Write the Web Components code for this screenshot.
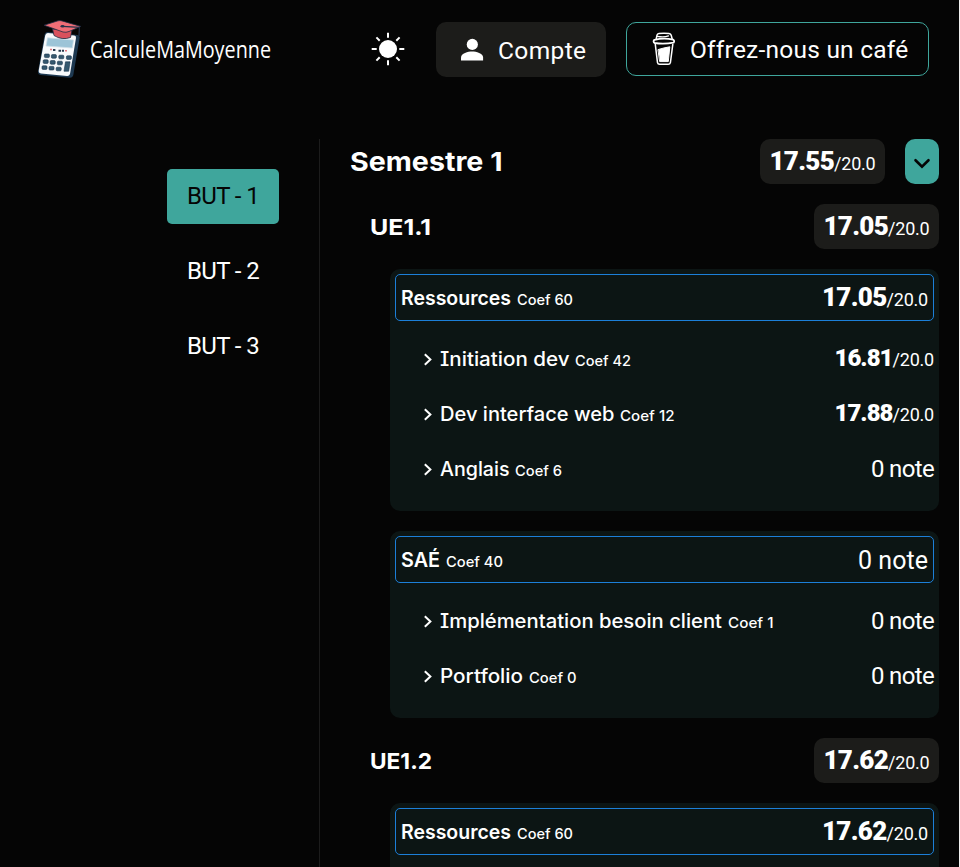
<!DOCTYPE html>
<html lang="fr">
<head>
<meta charset="utf-8">
<title>CalculeMaMoyenne</title>
<style>
  html, body { margin: 0; height: 100%; }
  body { background: #050505; color: #fff; font-family: Roboto, "Liberation Sans", sans-serif; overflow: hidden; }
</style>
</head>
<body>
<grade-app></grade-app>
<script>
const define = (name, html, setup) => {
  const tpl = document.createElement('template');
  tpl.innerHTML = html;
  customElements.define(name, class extends HTMLElement {
    connectedCallback() {
      if (this.shadowRoot) return;
      this.attachShadow({ mode: 'open' }).append(tpl.content.cloneNode(true));
      if (setup) setup.call(this, this.shadowRoot);
    }
  });
};

// Text set to an exact advance width: by tracking, or by horizontal stretch with [stretch].
define('fit-text', `<style>
  :host { display: inline-block; white-space: pre; flex: none; }
  span { display: inline-block; transform-origin: 0 50%; }
</style><span></span>`, function (root) {
  const s = root.querySelector('span');
  const text = this.getAttribute('text');
  const w = +this.getAttribute('w');
  s.textContent = text;
  const natural = s.offsetWidth ? s.getBoundingClientRect().width : w;
  if (this.hasAttribute('stretch')) s.style.transform = `scaleX(${w / natural})`;
  else s.style.letterSpacing = (w - natural) / text.length + 'px';
  this.style.width = w + 'px';
});

define('app-logo', `<style>:host { display: block; width: 44px; height: 60px; } svg { display: block; }</style>
<svg width="44" height="60" viewBox="0 0 44 60">
  <path d="M10 12 L39.5 15 Q42 15.3 41.6 18 L35.5 54 Q35 58 31.5 57.7 L2.5 55 Q-.6 54.5 .1 51 L6.5 15 Q7 12 10 12z" fill="#1d3850"/>
  <path d="M9.8 13 L36.2 15.6 Q38.4 16 38 18 L32.2 53 Q31.7 56.2 29 56 L3 53.5 Q.2 53 .8 50 L7.2 15.5 Q7.7 13 9.8 13z" fill="#f8fafc"/>
  <path d="M9.5 17.8 L35.5 20 L34.4 28 L8 26z" fill="#9cc4d7" stroke="#cfdfe8" stroke-width=".8"/>
  <path d="M12 29.5h2M27 30.7h2" stroke="#e07880" stroke-width="1.6"/>
  <path d="M15 30h2.4M20.5 30.7h2.6M25 29.8v2" stroke="#26384c" stroke-width="2"/>
  <g fill="#35586f" stroke="#16314a" stroke-width=".6">
    <rect x="6.4" y="34" width="5" height="3.6" rx="1"/><rect x="13.4" y="34.6" width="5" height="3.6" rx="1"/><rect x="20.8" y="35.2" width="5" height="3.6" rx="1"/><rect x="28.4" y="35.8" width="5" height="3.6" rx="1"/>
    <rect x="5.2" y="39.8" width="5" height="3.6" rx="1"/><rect x="12.2" y="40.6" width="5" height="3.6" rx="1"/><rect x="19.4" y="41.2" width="5" height="3.6" rx="1"/>
    <rect x="4" y="45.8" width="5" height="3.6" rx="1"/><rect x="11" y="46.4" width="5" height="3.6" rx="1"/><rect x="18.2" y="47.2" width="5" height="3.6" rx="1"/>
    <path d="M27.5 41.8h4.6l-1.4 9.4h-4.7z"/>
  </g>
  <path d="M14.5 9 L34 10 L32.5 17.5 Q24 20.5 16 15.5z" fill="#d9515d" stroke="#1d2c42" stroke-width=".8"/>
  <path d="M6 5.2 L20 .8 Q22 .3 24 .9 L42.8 6.4 L31 11.5 Q28 12.8 25 12z" fill="#ef6d76" stroke="#1d2c42" stroke-width=".8"/>
  <ellipse cx="24.5" cy="6.3" rx="2" ry="1.3" fill="#25324a"/>
  <path d="M24.5 6.3 L41.4 7.3 L41 16" fill="none" stroke="#25324a" stroke-width="1.2"/>
</svg>`);

define('sun-icon', `<style>:host { display: block; width: 34px; height: 34px; } svg { display: block; }</style>
<svg width="34" height="34" viewBox="-17 -17 34 34"><circle r="9" fill="#fff"/>
<path d="M0-16.3v5M0 16.3v-5M-16.3 0h5M16.3 0h-5M-11.6-11.6l3.3 3.3M11.6-11.6l-3.3 3.3M-11.6 11.6l3.3-3.3M11.6 11.6l-3.3-3.3" stroke="#fff" stroke-width="2"/></svg>`);

define('user-icon', `<style>:host { display: block; width: 24px; height: 24px; } svg { display: block; }</style>
<svg width="24" height="24" viewBox="0 0 24 24" fill="#fff"><circle cx="12.3" cy="6.4" r="5.6"/><path d="M1 22.4v-2.9c0-4.1 7-5.9 11.1-5.9s11 1.8 11 5.9v2.9z"/></svg>`);

define('cup-icon', `<style>:host { display: block; width: 24px; height: 34px; } svg { display: block; }</style>
<svg width="24" height="34" viewBox="0 0 24 34" fill="none" stroke="#fff" stroke-linecap="round" stroke-linejoin="round">
  <path d="M4.2 7 L5 3.2 Q5.3 1.7 7 1.5 Q12 .9 17 1.5 Q18.8 1.8 19.2 3.2 L20.2 7" stroke-width="1.5"/>
  <path d="M5.2 4.4 Q12 5.6 16.5 3.9" stroke-width="1.4"/>
  <path d="M2.5 7.8 Q12 5.6 21 7.6 Q23 8.8 21.6 10.6 Q12 12.6 2.6 11 Q.6 9.4 2.5 7.8z" stroke-width="1.8"/>
  <path d="M3.3 12.4 L5.5 30.6 Q5.8 32.3 7.6 32.3 H16.2 Q18 32.3 18.4 30.6 L20.8 12.4" stroke-width="1.5"/>
  <path d="M6.3 17.5 Q12 15.7 17.8 14.8 L16.3 29.6 H8z" fill="#fff" stroke-width="1"/>
</svg>`);

define('chevron-icon', `<style>:host { display: block; width: 10px; height: 14px; } svg { display: block; }</style>
<svg width="10" height="14" viewBox="0 0 10 14"><path d="M1.8 1.2 7.4 6.5 1.8 11.8" fill="none" stroke="#fff" stroke-width="2"/></svg>`);

define('header-button', `<style>
  :host { display: flex; align-items: center; box-sizing: border-box; border-radius: 10px; font-size: 24.5px; line-height: 30px; }
  ::slotted(fit-text) { padding-top: 2px; }
</style><slot></slot>`);

define('app-header', `<style>
  :host { display: flex; align-items: flex-start; padding: 20px 30px 0 38px; height: 119px; box-sizing: border-box; }
  .title { font: 500 24px/30px "Open Sans", "Noto Sans", sans-serif; margin: 14px 0 0 8px; }
  sun-icon { margin: 12px 31px 0 auto; }
  .account { background: #1c1c1a; width: 170px; height: 55px; margin: 2px 20px 0 0; padding-left: 24px; gap: 14px; }
  .coffee { border: 1px solid #3fa69c; width: 303px; height: 54px; margin-top: 2px; padding-left: 25px; gap: 14px; }
</style>
<app-logo></app-logo><fit-text class="title" text="CalculeMaMoyenne" w="181" stretch></fit-text>
<sun-icon></sun-icon>
<header-button class="account"><user-icon></user-icon><fit-text text="Compte" w="88.5"></fit-text></header-button>
<header-button class="coffee"><cup-icon></cup-icon><fit-text text="Offrez-nous un café" w="218.5"></fit-text></header-button>`);

define('year-tab', `<style>
  :host { display: flex; align-items: center; box-sizing: border-box; width: 112px; height: 55px; padding: 0 0 2px 20px; border-radius: 5px; font-size: 24px; line-height: 30px; }
  :host([active]) { background: #3fa69c; color: #050505; }
</style><slot></slot>`);

define('grade-value', `<style>
  :host { display: inline-flex; align-items: baseline; line-height: 30px; margin-left: auto; padding-top: 2px; flex: none; }
  :host([small]) { padding: 0 0 2px; }
  :host([small][v]) { padding: 0 0 1px; }
  .n { font-size: 26px; font-weight: 900; } .d { font-size: 18px; }
  .none { font-size: 25px; }
  :host([small]) .n { font-size: 24px; } :host([small]) .none { font-size: 24px; }
</style>`, function (root) {
  const v = this.getAttribute('v'), small = this.hasAttribute('small');
  const box = document.createElement('div');
  box.style.cssText = 'display:flex;align-items:baseline';
  box.innerHTML = v
    ? `<fit-text class="n" text="${v}" w="${small ? 58 : 64.5}"></fit-text><fit-text class="d" text="/20.0" w="41.5"></fit-text>`
    : `<fit-text class="none" text="0 note" w="${small ? 63 : 70}"></fit-text>`;
  root.append(box);
});

define('grade-pill', `<style>
  :host { display: flex; align-items: center; justify-content: flex-end; box-sizing: border-box; width: 125px; height: 45px; padding: 0 9.5px; border-radius: 10px; background: #1c1c1a; flex: none; margin-left: auto; }
</style><slot></slot>`);

define('toggle-button', `<style>
  :host { display: flex; align-items: center; justify-content: center; box-sizing: border-box; width: 34px; height: 45px; padding-top: 4px; margin-left: 20px; border-radius: 10px; background: #3fa69c; flex: none; }
</style><svg width="18" height="12" viewBox="0 0 18 12"><path d="M2.5 2.2 9 8.6 15.5 2.2" fill="none" stroke="#050505" stroke-width="2.6" stroke-linecap="round"/></svg>`);

define('row-label', `<style>
  :host { display: flex; align-items: baseline; line-height: 28px; font-family: Inter, "Open Sans", sans-serif; font-feature-settings: "cv08"; }
  .name { font-size: 19.5px; font-weight: 470; } .coef { font-size: 14.5px; font-weight: 500; }
  :host([strong]) { padding-top: 2px; }
  :host([strong]) .name { font-weight: 620; }
</style><slot></slot>`, function (root) {
  const [name, w, coef, cw] = this.getAttribute('spec').split('|');
  const box = document.createElement('div');
  box.style.cssText = 'display:flex;align-items:baseline;gap:5.5px';
  box.innerHTML = `<fit-text class="name" stretch text="${name}" w="${w}"></fit-text><fit-text class="coef" stretch text="${coef}" w="${cw}"></fit-text>`;
  root.append(box);
});

define('module-row', `<style>
  :host { display: flex; align-items: center; height: 55px; padding-left: 28px; }
  chevron-icon { margin-right: 7px; }
</style><chevron-icon></chevron-icon><slot></slot>`);

define('module-card', `<style>
  :host { display: block; margin: 20px 0 0 40px; padding: 5px 5px 14px; border-radius: 10px; background: #0c1514; }
  .head { display: flex; align-items: center; box-sizing: border-box; height: 47px; padding: 0 5px; border: 1px solid #1c7fd8; border-radius: 5px; margin-bottom: 11px; }
</style><div class="head"><slot name="head"></slot></div><slot></slot>`);

define('section-head', `<style>
  :host { display: flex; align-items: center; height: 45px; font: 750 26px/32px Inter, "Open Sans", sans-serif; }
  :host([unit]) { font-size: 22px; font-weight: 700; margin: 20px 0 0 20px; }
  :host(:not([unit])) ::slotted(fit-text) { padding-top: 1px; }
  ::slotted(grade-pill), ::slotted(toggle-button) { font-family: Roboto, sans-serif; font-weight: 400; }
</style><slot></slot>`);

define('grade-app', `<style>
  :host { display: block; box-sizing: border-box; height: 867px; overflow: hidden; border-right: 1px solid #f2f2f2; }
  main { display: grid; grid-template-columns: 320px 1fr; padding-top: 20px; height: 748px; box-sizing: border-box; }
  nav { display: flex; flex-direction: column; align-items: flex-end; gap: 20px; padding: 30px 40px 0 0; border-right: 1px solid #1c1c1c; }
  section { padding: 0 20px 0 30px; min-width: 0; }
</style>
<app-header></app-header>
<main>
  <nav>
    <year-tab active><fit-text text="BUT - 1" w="72"></fit-text></year-tab>
    <year-tab><fit-text text="BUT - 2" w="72"></fit-text></year-tab>
    <year-tab><fit-text text="BUT - 3" w="72"></fit-text></year-tab>
  </nav>
  <section>
    <section-head><fit-text text="Semestre 1" w="152.5" stretch></fit-text><grade-pill><grade-value v="17.55"></grade-value></grade-pill><toggle-button></toggle-button></section-head>
    <section-head unit><fit-text text="UE1.1" w="61" stretch></fit-text><grade-pill><grade-value v="17.05"></grade-value></grade-pill></section-head>
    <module-card>
      <row-label slot="head" strong spec="Ressources|110|Coef 60|56"></row-label><grade-value slot="head" v="17.05"></grade-value>
      <module-row><row-label spec="Initiation dev|129.5|Coef 42|56"></row-label><grade-value small v="16.81"></grade-value></module-row>
      <module-row><row-label spec="Dev interface web|174.5|Coef 12|54.5"></row-label><grade-value small v="17.88"></grade-value></module-row>
      <module-row><row-label spec="Anglais|69.5|Coef 6|47"></row-label><grade-value small></grade-value></module-row>
    </module-card>
    <module-card>
      <row-label slot="head" strong spec="SAÉ|39|Coef 40|57"></row-label><grade-value slot="head"></grade-value>
      <module-row><row-label spec="Implémentation besoin client|282|Coef 1|45.5"></row-label><grade-value small></grade-value></module-row>
      <module-row><row-label spec="Portfolio|83|Coef 0|47.5"></row-label><grade-value small></grade-value></module-row>
    </module-card>
    <section-head unit><fit-text text="UE1.2" w="62" stretch></fit-text><grade-pill><grade-value v="17.62"></grade-value></grade-pill></section-head>
    <module-card>
      <row-label slot="head" strong spec="Ressources|110|Coef 60|56"></row-label><grade-value slot="head" v="17.62"></grade-value>
    </module-card>
  </section>
</main>`);
</script>
</body>
</html>
